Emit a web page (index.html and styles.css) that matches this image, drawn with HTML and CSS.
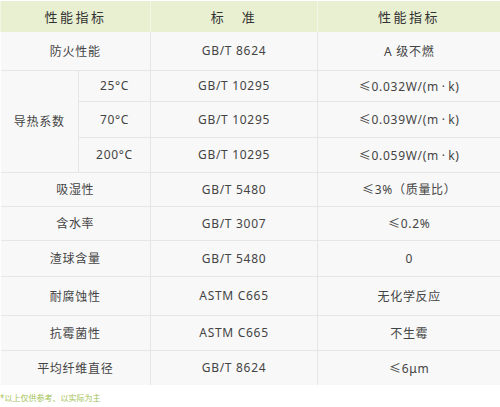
FILE: index.html
```html
<!DOCTYPE html>
<html lang="zh">
<head>
<meta charset="utf-8">
<link rel="stylesheet" href="styles.css">
</head>
<body>
<div class="wrap">
<table class="spec">
  <colgroup>
    <col class="c1"><col class="c2"><col class="c3"><col class="c4">
  </colgroup>
  <thead>
    <tr class="h32"><th colspan="2">性能指标</th><th>标　准</th><th>性能指标</th></tr>
  </thead>
  <tbody>
    <tr class="h38"><td colspan="2">防火性能</td><td>GB/T 8624</td><td>A 级不燃</td></tr>
    <tr class="h32"><td rowspan="3">导热系数</td><td>25°C</td><td>GB/T 10295</td><td>≤0.032W/(m&#8201;·&#8201;k)</td></tr>
    <tr class="h36"><td>70°C</td><td>GB/T 10295</td><td>≤0.039W/(m&#8201;·&#8201;k)</td></tr>
    <tr class="h35"><td>200°C</td><td>GB/T 10295</td><td>≤0.059W/(m&#8201;·&#8201;k)</td></tr>
    <tr class="h34"><td colspan="2">吸湿性</td><td>GB/T 5480</td><td>≤3%（质量比）</td></tr>
    <tr class="h34"><td colspan="2">含水率</td><td>GB/T 3007</td><td>≤0.2%</td></tr>
    <tr class="h36"><td colspan="2">渣球含量</td><td>GB/T 5480</td><td>0</td></tr>
    <tr class="h39"><td colspan="2">耐腐蚀性</td><td>ASTM C665</td><td>无化学反应</td></tr>
    <tr class="h35"><td colspan="2">抗霉菌性</td><td>ASTM C665</td><td>不生霉</td></tr>
    <tr class="h35"><td colspan="2">平均纤维直径</td><td>GB/T 8624</td><td>≤6μm</td></tr>
  </tbody>
</table>
<p class="note">*以上仅供参考、以实际为主</p>
</div>
</body>
</html>
```

FILE: styles.css
```css
html, body {
  margin: 0;
  padding: 0;
  background: #ffffff;
}
body {
  font-family: "Noto Sans", "Noto Sans CJK SC", sans-serif;
  color: #444444;
  width: 500px;
}
.wrap {
  padding-top: 1px;
}
.spec {
  width: 500px;
  border-collapse: collapse;
  table-layout: fixed;
}
.c1 { width: 78px; }
.c2 { width: 72px; }
.c3 { width: 167px; }
.c4 { width: 183px; }
.spec th {
  background: #e9f0d2;
  color: #333333;
  font-size: 13px;
  font-weight: 400;
  letter-spacing: 2.5px;
  text-align: center;
  padding: 0;
  border-left: 1px solid #f3f6e6;
  border-right: 1px solid #f3f6e6;
}
.spec td {
  background: #f8f8f8;
  border: 1px solid #e6e6e6;
  font-size: 12px;
  text-align: center;
  padding: 0;
  letter-spacing: 0.7px;
}
.spec td:first-child { border-left: none; }
.spec td:last-child { border-right: none; }
.spec tbody tr:first-child td { border-top: none; }
.spec tbody tr:last-child td { border-bottom: none; }
.h32 { height: 31px; }
.h34 { height: 34px; }
.h35 { height: 35px; }
.h36 { height: 36px; }
.h38 { height: 38px; }
.h39 { height: 39px; }
.note {
  margin: 7px 0 0 0;
  font-size: 8px;
  color: #a3c257;
  line-height: 12px;
}
```
